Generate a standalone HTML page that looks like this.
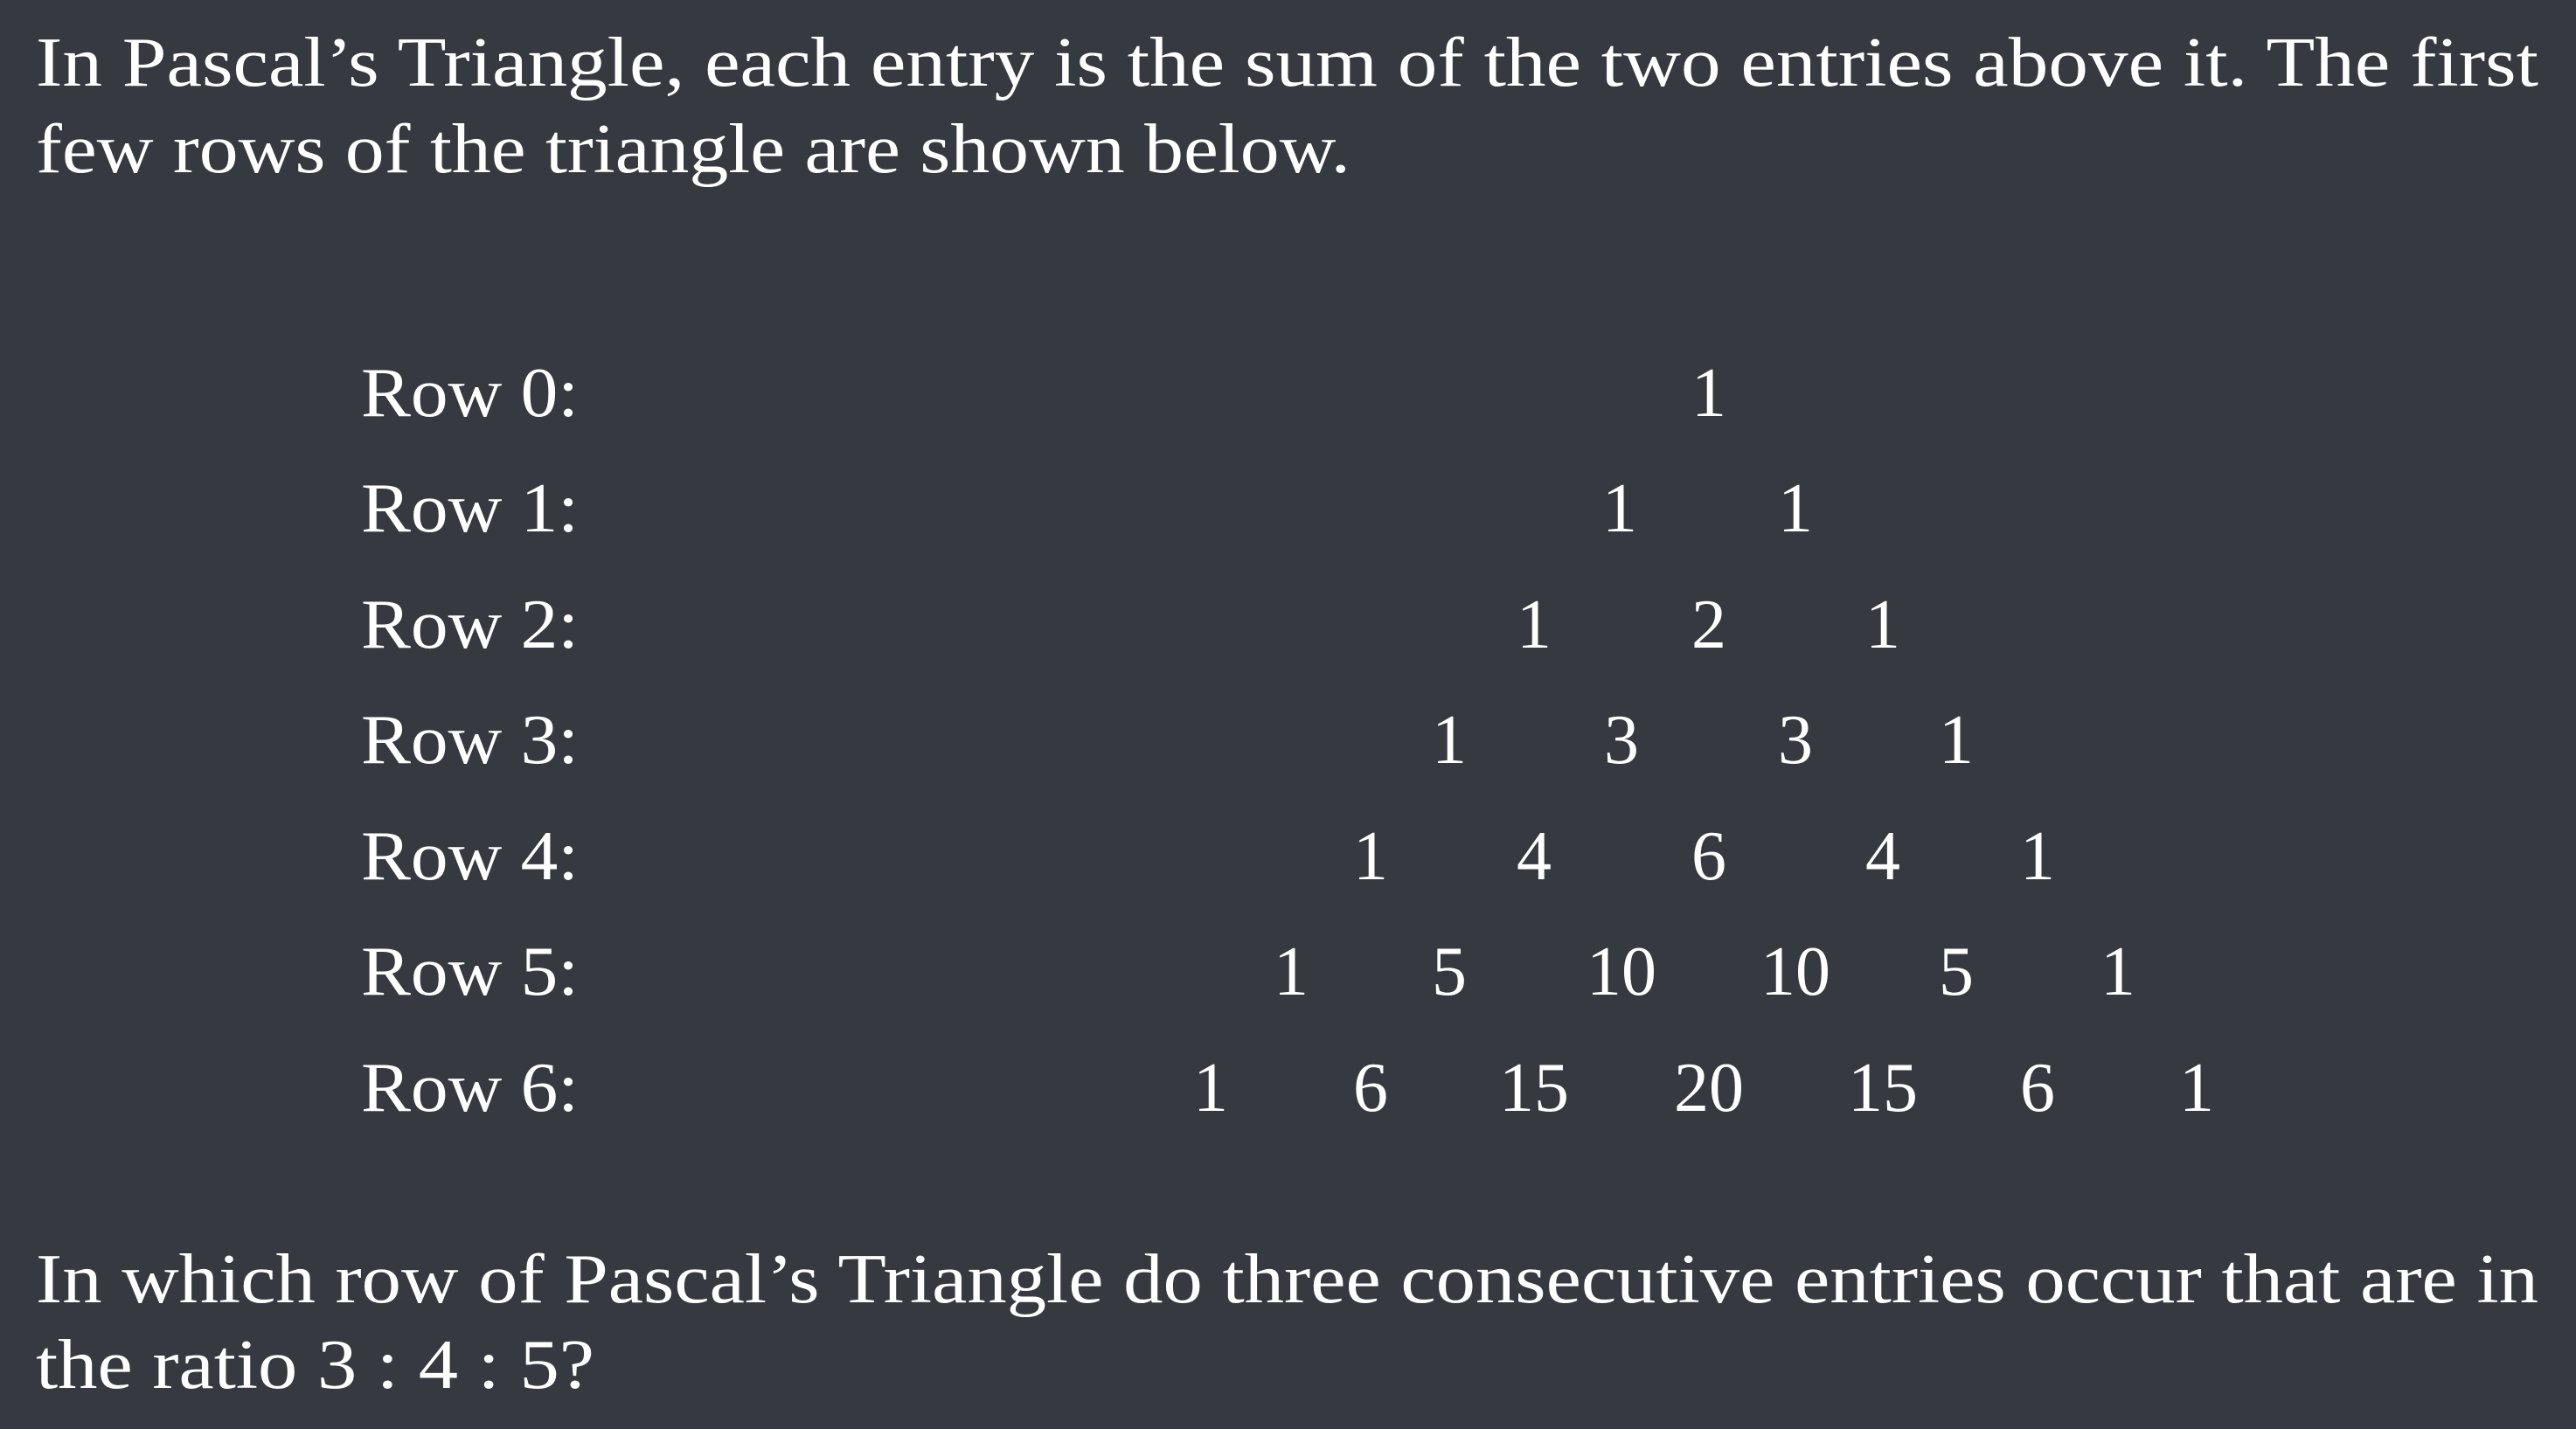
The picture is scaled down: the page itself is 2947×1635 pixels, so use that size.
<!DOCTYPE html>
<html><head><meta charset="utf-8"><style>
html,body{margin:0;padding:0;background:#36393f;}
svg{display:block}
text{font-family:"Liberation Serif","DejaVu Serif",serif;fill:#fff;font-size:80px}
</style></head><body>
<svg width="2947" height="1635" viewBox="0 0 2947 1635" xmlns="http://www.w3.org/2000/svg">
<rect width="2947" height="1635" fill="#36393f"/>
<text x="41" y="98" textLength="2863" lengthAdjust="spacingAndGlyphs">In Pascal’s Triangle, each entry is the sum of the two entries above it. The first</text>
<text x="41" y="197" textLength="1504" lengthAdjust="spacingAndGlyphs">few rows of the triangle are shown below.</text>
<g>
<text x="413" y="476" textLength="249" lengthAdjust="spacingAndGlyphs">Row 0:</text>
<text x="413" y="608" textLength="249" lengthAdjust="spacingAndGlyphs">Row 1:</text>
<text x="413" y="741" textLength="249" lengthAdjust="spacingAndGlyphs">Row 2:</text>
<text x="413" y="873" textLength="249" lengthAdjust="spacingAndGlyphs">Row 3:</text>
<text x="413" y="1006" textLength="249" lengthAdjust="spacingAndGlyphs">Row 4:</text>
<text x="413" y="1138" textLength="249" lengthAdjust="spacingAndGlyphs">Row 5:</text>
<text x="413" y="1271" textLength="249" lengthAdjust="spacingAndGlyphs">Row 6:</text>
</g>
<g text-anchor="middle">
<text x="1955" y="476">1</text>
<text x="1853" y="608">1</text><text x="2054" y="608">1</text>
<text x="1755" y="741">1</text><text x="1955" y="741">2</text><text x="2154" y="741">1</text>
<text x="1658" y="873">1</text><text x="1855" y="873">3</text><text x="2054" y="873">3</text><text x="2238" y="873">1</text>
<text x="1568" y="1006">1</text><text x="1755" y="1006">4</text><text x="1955" y="1006">6</text><text x="2154" y="1006">4</text><text x="2331" y="1006">1</text>
<text x="1477" y="1138">1</text><text x="1658" y="1138">5</text><text x="1855" y="1138">10</text><text x="2054" y="1138">10</text><text x="2238" y="1138">5</text><text x="2423" y="1138">1</text>
<text x="1385" y="1271">1</text><text x="1568" y="1271">6</text><text x="1755" y="1271">15</text><text x="1955" y="1271">20</text><text x="2154" y="1271">15</text><text x="2331" y="1271">6</text><text x="2513" y="1271">1</text>
</g>
<text x="41" y="1490" textLength="2863" lengthAdjust="spacingAndGlyphs">In which row of Pascal’s Triangle do three consecutive entries occur that are in</text>
<text x="41" y="1588" textLength="639" lengthAdjust="spacingAndGlyphs">the ratio 3 : 4 : 5?</text>
</svg>
</body></html>
